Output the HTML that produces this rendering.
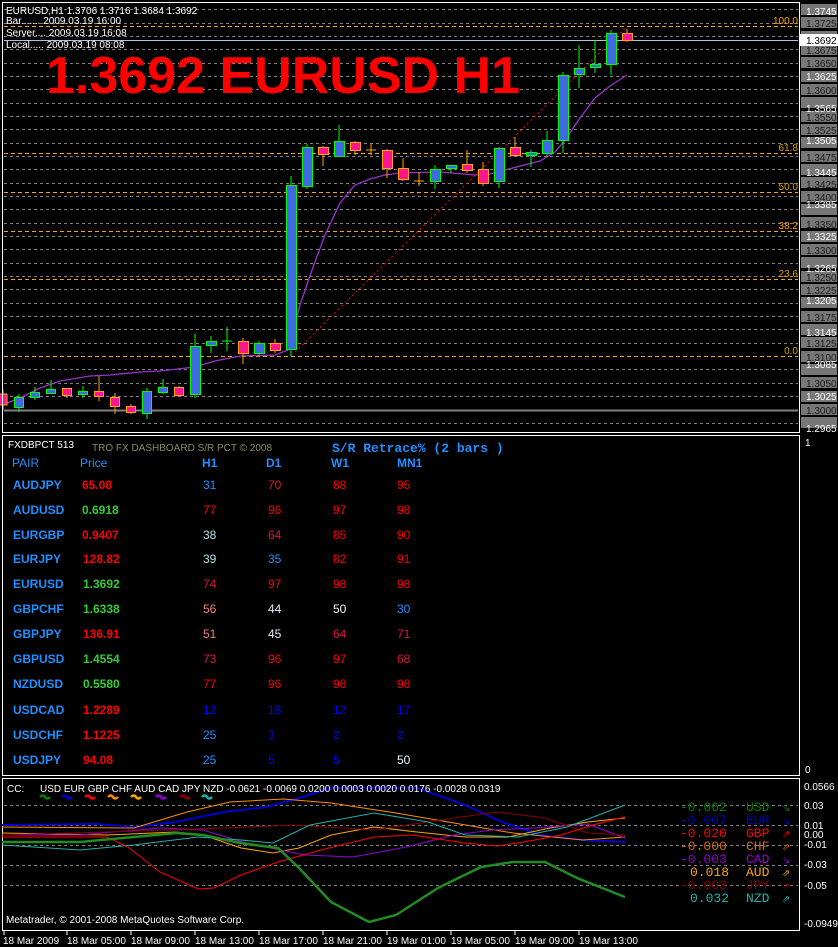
<!DOCTYPE html>
<html><head><meta charset="utf-8"><style>
html,body{margin:0;padding:0;background:#000;}
svg{display:block}
.s{font-family:"Liberation Sans",sans-serif;font-size:10px;}
.g{stroke:#808080;stroke-dasharray:3,3;stroke-width:1}
.f{stroke:#ffa500;stroke-dasharray:4,3;stroke-width:1}
.b rect{fill:#4169e1;stroke:#00ff00}.b line{stroke:#00ff00}
.r rect{fill:#ff1493;stroke:#ffa500}.r line{stroke:#ffa500}
.pb{fill:#777}
.pt{fill:#1a1a1a;font-family:"Liberation Sans",sans-serif;font-size:10px}
.wt{fill:#fff;font-family:"Liberation Sans",sans-serif;font-size:10px}
.d{font-family:"Liberation Sans",sans-serif;font-size:12px}
.db{font-family:"Liberation Sans",sans-serif;font-size:12px;font-weight:bold}
.m{font-family:"Liberation Mono",monospace;font-size:13px}
</style></head><body>
<svg width="838" height="947" viewBox="0 0 838 947" xmlns="http://www.w3.org/2000/svg">
<rect width="838" height="947" fill="#000"/>
<g class="g">
<line x1="4" x2="798" y1="9.5" y2="9.5"/><line x1="4" x2="798" y1="23.5" y2="23.5"/><line x1="4" x2="798" y1="36.5" y2="36.5"/><line x1="4" x2="798" y1="49.5" y2="49.5"/><line x1="4" x2="798" y1="63.5" y2="63.5"/><line x1="4" x2="798" y1="76.5" y2="76.5"/><line x1="4" x2="798" y1="89.5" y2="89.5"/><line x1="4" x2="798" y1="103.5" y2="103.5"/><line x1="4" x2="798" y1="116.5" y2="116.5"/><line x1="4" x2="798" y1="129.5" y2="129.5"/><line x1="4" x2="798" y1="143.5" y2="143.5"/><line x1="4" x2="798" y1="156.5" y2="156.5"/><line x1="4" x2="798" y1="169.5" y2="169.5"/><line x1="4" x2="798" y1="183.5" y2="183.5"/><line x1="4" x2="798" y1="196.5" y2="196.5"/><line x1="4" x2="798" y1="209.5" y2="209.5"/><line x1="4" x2="798" y1="223.5" y2="223.5"/><line x1="4" x2="798" y1="236.5" y2="236.5"/><line x1="4" x2="798" y1="249.5" y2="249.5"/><line x1="4" x2="798" y1="263.5" y2="263.5"/><line x1="4" x2="798" y1="276.5" y2="276.5"/><line x1="4" x2="798" y1="289.5" y2="289.5"/><line x1="4" x2="798" y1="303.5" y2="303.5"/><line x1="4" x2="798" y1="316.5" y2="316.5"/><line x1="4" x2="798" y1="329.5" y2="329.5"/><line x1="4" x2="798" y1="343.5" y2="343.5"/><line x1="4" x2="798" y1="369.5" y2="369.5"/><line x1="4" x2="798" y1="383.5" y2="383.5"/><line x1="4" x2="798" y1="396.5" y2="396.5"/><line x1="4" x2="798" y1="423.5" y2="423.5"/>
</g>
<line x1="4" x2="798" y1="410.5" y2="410.5" stroke="#808080" stroke-width="2"/>
<g class="f">
<line x1="4" x2="798" y1="26.5" y2="26.5"/><line x1="4" x2="798" y1="153.5" y2="153.5"/><line x1="4" x2="798" y1="192.5" y2="192.5"/><line x1="4" x2="798" y1="231.5" y2="231.5"/><line x1="4" x2="798" y1="279.5" y2="279.5"/><line x1="4" x2="798" y1="356.5" y2="356.5"/>
</g>
<g class="s" text-anchor="end">
<text x="798" y="24" fill="#ffa500">100.0</text><text x="798" y="151" fill="#d8a000">61.8</text><text x="798" y="190" fill="#d8a000">50.0</text><text x="798" y="229" fill="#ffa500">38.2</text><text x="798" y="277" fill="#d8a000">23.6</text><text x="798" y="354" fill="#c8a000">0.0</text>
</g>
<line x1="4" x2="798" y1="40.5" y2="40.5" stroke="#b0c4de"/>
<polyline fill="none" stroke="#9932cc" stroke-width="1.3" points="2,405 20,398 40,388 60,381 90,376 110,375 140,372 160,371 195,367 215,361 240,356 275,355 288,350 300,305 312,270 325,235 340,203 355,185 370,179 385,175 400,173 440,172 475,175 490,174 505,170 540,161 555,152 565,140 580,118 595,98 610,86 627,75"/>
<polyline fill="none" stroke="#ff0000" stroke-dasharray="2,3" points="295,352 625,28"/>
<g class="r"><line x1="3" x2="3" y1="390" y2="410"/><rect x="-1" y="394" width="8" height="11"/></g>
<g class="b"><line x1="19" x2="19" y1="394" y2="412"/><rect x="14.5" y="397.5" width="9" height="10"/></g>
<g class="b"><line x1="35" x2="35" y1="387" y2="400"/><rect x="30.5" y="392.5" width="9" height="5"/></g>
<g class="b"><line x1="51" x2="51" y1="380" y2="393"/><rect x="46.5" y="389.5" width="9" height="4"/></g>
<g class="r"><line x1="67" x2="67" y1="388" y2="398"/><rect x="62.5" y="388.5" width="9" height="7"/></g>
<g class="b"><line x1="83" x2="83" y1="386" y2="398"/><rect x="78.5" y="391.5" width="9" height="3"/></g>
<g class="r"><line x1="99" x2="99" y1="376" y2="401"/><rect x="94.5" y="391.5" width="9" height="5"/></g>
<g class="r"><line x1="115" x2="115" y1="393" y2="414"/><rect x="110.5" y="397.5" width="9" height="9"/></g>
<g class="r"><line x1="131" x2="131" y1="404" y2="414"/><rect x="126.5" y="406.5" width="9" height="6"/></g>
<g class="b"><line x1="147" x2="147" y1="388" y2="419"/><rect x="142.5" y="391.5" width="9" height="22"/></g>
<g class="b"><line x1="163" x2="163" y1="379" y2="394"/><rect x="158.5" y="387.5" width="9" height="5"/></g>
<g class="r"><line x1="179" x2="179" y1="386" y2="397"/><rect x="174.5" y="387.5" width="9" height="8"/></g>
<g class="b"><line x1="195" x2="195" y1="334" y2="398"/><rect x="190.5" y="346.5" width="10" height="48"/></g>
<g class="b"><line x1="211" x2="211" y1="336" y2="353"/><rect x="206.5" y="341.5" width="10" height="4"/></g>
<g class="b"><line x1="227" x2="227" y1="327" y2="351"/><line x1="222" x2="232" y1="341" y2="341"/></g>
<g class="r"><line x1="243" x2="243" y1="338" y2="364"/><rect x="238.5" y="341.5" width="10" height="12"/></g>
<g class="b"><line x1="259" x2="259" y1="341" y2="355"/><rect x="254.5" y="343.5" width="10" height="10"/></g>
<g class="r"><line x1="275" x2="275" y1="339" y2="353"/><rect x="270.5" y="343.5" width="10" height="7"/></g>
<g class="b"><line x1="291" x2="291" y1="176" y2="356"/><rect x="286.5" y="185.5" width="10" height="164"/></g>
<g class="b"><line x1="307" x2="307" y1="144" y2="189"/><rect x="302.5" y="147.5" width="10" height="39"/></g>
<g class="r"><line x1="323" x2="323" y1="146" y2="166"/><rect x="318.5" y="147.5" width="10" height="7"/></g>
<g class="b"><line x1="339" x2="339" y1="125" y2="156"/><rect x="334.5" y="141.5" width="10" height="15"/></g>
<g class="r"><line x1="355" x2="355" y1="141" y2="155"/><rect x="350.5" y="142.5" width="10" height="8"/></g>
<g class="r"><line x1="371" x2="371" y1="143" y2="155"/><line x1="366" x2="376" y1="150" y2="150"/></g>
<g class="r"><line x1="387" x2="387" y1="149" y2="178"/><rect x="382.5" y="150.5" width="10" height="18"/></g>
<g class="r"><line x1="403" x2="403" y1="158" y2="181"/><rect x="398.5" y="168.5" width="10" height="11"/></g>
<g class="r"><line x1="419" x2="419" y1="172" y2="186"/><line x1="414" x2="424" y1="181" y2="181"/></g>
<g class="b"><line x1="435" x2="435" y1="165" y2="189"/><rect x="430.5" y="169.5" width="10" height="12"/></g>
<g class="b"><line x1="451" x2="451" y1="165" y2="173"/><rect x="446.5" y="165.5" width="10" height="3"/></g>
<g class="r"><line x1="467" x2="467" y1="150" y2="173"/><rect x="462.5" y="164.5" width="10" height="6"/></g>
<g class="r"><line x1="483" x2="483" y1="162" y2="186"/><rect x="478.5" y="169.5" width="10" height="14"/></g>
<g class="b"><line x1="499" x2="499" y1="147" y2="188"/><rect x="494.5" y="148.5" width="10" height="33"/></g>
<g class="r"><line x1="515" x2="515" y1="137" y2="157"/><rect x="510.5" y="147.5" width="10" height="8"/></g>
<g class="b"><line x1="531" x2="531" y1="150" y2="167"/><rect x="526.5" y="152.5" width="10" height="3"/></g>
<g class="b"><line x1="547" x2="547" y1="131" y2="157"/><rect x="542.5" y="140.5" width="10" height="13"/></g>
<g class="b"><line x1="563" x2="563" y1="72" y2="153"/><rect x="558.5" y="75.5" width="10" height="65"/></g>
<g class="b"><line x1="579" x2="579" y1="45" y2="88"/><rect x="574.5" y="68.5" width="10" height="6"/></g>
<g class="b"><line x1="595" x2="595" y1="40" y2="73"/><rect x="590.5" y="64.5" width="10" height="3"/></g>
<g class="b"><line x1="611" x2="611" y1="30" y2="75"/><rect x="606.5" y="33.5" width="10" height="31"/></g>
<g class="r"><line x1="627" x2="627" y1="29" y2="42"/><rect x="622.5" y="33.5" width="10" height="7"/></g>
<g class="wt"><text x="6" y="14">EURUSD,H1  1.3706 1.3716 1.3684 1.3692</text><text x="6" y="24">Bar....... 2009.03.19 16:00</text><text x="6" y="36">Server.... 2009.03.19 16:08</text><text x="6" y="48">Local..... 2009.03.19 08:08</text></g>
<text x="46" y="93" fill="#ff0000" font-family="Liberation Sans,sans-serif" font-size="52" font-weight="bold">1.3692 EURUSD H1</text>
<g class="pb">
<rect x="801" y="4" width="36" height="11"/><rect x="801" y="17" width="36" height="11"/><rect x="801" y="31" width="36" height="11"/><rect x="801" y="44" width="36" height="11"/><rect x="801" y="57" width="36" height="11"/><rect x="801" y="71" width="36" height="11"/><rect x="801" y="84" width="36" height="11"/><rect x="801" y="97" width="36" height="11"/><rect x="801" y="111" width="36" height="11"/><rect x="801" y="124" width="36" height="11"/><rect x="801" y="137" width="36" height="11"/><rect x="801" y="151" width="36" height="11"/><rect x="801" y="164" width="36" height="11"/><rect x="801" y="177" width="36" height="11"/><rect x="801" y="191" width="36" height="11"/><rect x="801" y="204" width="36" height="11"/><rect x="801" y="217" width="36" height="11"/><rect x="801" y="231" width="36" height="11"/><rect x="801" y="244" width="36" height="11"/><rect x="801" y="257" width="36" height="11"/><rect x="801" y="271" width="36" height="11"/><rect x="801" y="284" width="36" height="11"/><rect x="801" y="297" width="36" height="11"/><rect x="801" y="311" width="36" height="11"/><rect x="801" y="324" width="36" height="11"/><rect x="801" y="337" width="36" height="11"/><rect x="801" y="351" width="36" height="11"/><rect x="801" y="364" width="36" height="11"/><rect x="801" y="377" width="36" height="11"/><rect x="801" y="391" width="36" height="11"/><rect x="801" y="404" width="36" height="11"/><rect x="801" y="417" width="36" height="11"/>
</g>
<g class="pt">
<text x="806" y="27">1.3725</text><text x="806" y="54">1.3675</text><text x="806" y="67">1.3650</text><text x="806" y="94">1.3600</text><text x="806" y="121">1.3550</text><text x="806" y="134">1.3525</text><text x="806" y="161">1.3475</text><text x="806" y="188">1.3425</text><text x="806" y="201">1.3400</text><text x="806" y="228">1.3350</text><text x="806" y="254">1.3300</text><text x="806" y="281">1.3250</text><text x="806" y="294">1.3225</text><text x="806" y="321">1.3175</text><text x="806" y="347">1.3125</text><text x="806" y="361">1.3100</text><text x="806" y="387">1.3050</text><text x="806" y="414">1.3000</text>
</g>
<rect x="800" y="34" width="38" height="12" fill="#fff"/>
<text x="806" y="44" fill="#000" class="s">1.3692</text>
<g class="wt">
<text x="806" y="15">1.3745</text><text x="806" y="80">1.3625</text><text x="806" y="112">1.3565</text><text x="806" y="144">1.3505</text><text x="806" y="176">1.3445</text><text x="806" y="208">1.3385</text><text x="806" y="240">1.3325</text><text x="806" y="272">1.3265</text><text x="806" y="304">1.3205</text><text x="806" y="336">1.3145</text><text x="806" y="368">1.3085</text><text x="806" y="400">1.3025</text><text x="806" y="432">1.2965</text>
</g>
<g stroke="#fff" fill="none">
<rect x="2.5" y="2.5" width="797" height="430"/>
<rect x="2.5" y="435.5" width="797" height="340"/>
<rect x="2.5" y="778.5" width="797" height="152"/>
</g>
<text x="8" y="448" fill="#fff" class="s">FXDBPCT 513</text>
<text x="92" y="451" fill="#8a8a6a" font-family="Liberation Sans,sans-serif" font-size="10">TRO FX DASHBOARD S/R PCT © 2008</text>
<text x="332" y="452" fill="#1e90ff" font-family="Liberation Mono,monospace" font-size="13" font-weight="bold">S/R Retrace% (2 bars )</text>
<text x="805" y="446" fill="#fff" class="s">1</text><text x="805" y="773" fill="#fff" class="s">0</text>
<g class="d" fill="#1e90ff"><text x="12" y="467">PAIR</text><text x="80" y="467">Price</text><text x="202" y="467" font-weight="bold">H1</text><text x="266" y="467" font-weight="bold">D1</text><text x="331" y="467" font-weight="bold">W1</text><text x="397" y="467" font-weight="bold">MN1</text></g>
<g class="db" fill="#1e90ff">
<text x="13" y="489">AUDJPY</text><text x="13" y="514">AUDUSD</text><text x="13" y="539">EURGBP</text><text x="13" y="563">EURJPY</text><text x="13" y="588">EURUSD</text><text x="13" y="613">GBPCHF</text><text x="13" y="638">GBPJPY</text><text x="13" y="663">GBPUSD</text><text x="13" y="688">NZDUSD</text><text x="13" y="714">USDCAD</text><text x="13" y="739">USDCHF</text><text x="13" y="764">USDJPY</text>
</g>
<g class="db">
<text x="82" y="489" fill="#ff0000">65.08</text><text x="82" y="514" fill="#32cd32">0.6918</text><text x="82" y="539" fill="#ff0000">0.9407</text><text x="83" y="563" fill="#ff0000">128.82</text><text x="83" y="588" fill="#32cd32">1.3692</text><text x="83" y="613" fill="#32cd32">1.6338</text><text x="83" y="638" fill="#ff0000">136.91</text><text x="83" y="663" fill="#32cd32">1.4554</text><text x="83" y="688" fill="#32cd32">0.5580</text><text x="83" y="714" fill="#ff0000">1.2289</text><text x="83" y="739" fill="#ff0000">1.1225</text><text x="83" y="764" fill="#ff0000">94.08</text>
</g>
<g class="d">
<text x="203" y="489" fill="#1e90ff">31</text><text x="268" y="489" fill="#dc143c">70</text><text x="333" y="489" fill="#ff0000">88</text><text x="397" y="489" fill="#ff0000">95</text>
<text x="203" y="514" fill="#ff0000">77</text><text x="268" y="514" fill="#ff0000">96</text><text x="333" y="514" fill="#ff0000">97</text><text x="397" y="514" fill="#ff0000">98</text>
<text x="203" y="539" fill="#b0e0e6">38</text><text x="268" y="539" fill="#dc143c">64</text><text x="333" y="539" fill="#ff0000">85</text><text x="397" y="539" fill="#ff0000">90</text>
<text x="203" y="563" fill="#b0e0e6">39</text><text x="268" y="563" fill="#1e90ff">35</text><text x="333" y="563" fill="#ff0000">82</text><text x="397" y="563" fill="#ff0000">91</text>
<text x="203" y="588" fill="#dc143c">74</text><text x="268" y="588" fill="#ff0000">97</text><text x="333" y="588" fill="#ff0000">98</text><text x="397" y="588" fill="#ff0000">98</text>
<text x="203" y="613" fill="#f08080">56</text><text x="268" y="613" fill="#e6e6fa">44</text><text x="333" y="613" fill="#f0f8ff">50</text><text x="397" y="613" fill="#1e90ff">30</text>
<text x="203" y="638" fill="#f08080">51</text><text x="268" y="638" fill="#e6e6fa">45</text><text x="333" y="638" fill="#dc143c">64</text><text x="397" y="638" fill="#dc143c">71</text>
<text x="203" y="663" fill="#dc143c">73</text><text x="268" y="663" fill="#ff0000">96</text><text x="333" y="663" fill="#ff0000">97</text><text x="397" y="663" fill="#dc143c">68</text>
<text x="203" y="688" fill="#ff0000">77</text><text x="268" y="688" fill="#ff0000">96</text><text x="333" y="688" fill="#ff0000">98</text><text x="397" y="688" fill="#ff0000">98</text>
<text x="203" y="714" fill="#0000ff">12</text><text x="268" y="714" fill="#0000ff">18</text><text x="333" y="714" fill="#0000ff">12</text><text x="397" y="714" fill="#0000ff">17</text>
<text x="203" y="739" fill="#1e90ff">25</text><text x="268" y="739" fill="#0000ff">3</text><text x="333" y="739" fill="#0000ff">2</text><text x="397" y="739" fill="#0000ff">2</text>
<text x="203" y="764" fill="#1e90ff">25</text><text x="268" y="764" fill="#0000ff">5</text><text x="333" y="764" fill="#0000ff">5</text><text x="397" y="764" fill="#f0f8ff">50</text>
</g>
<g class="g"><line x1="4" x2="798" y1="805.5" y2="805.5"/><line x1="4" x2="798" y1="825.5" y2="825.5"/><line x1="4" x2="798" y1="845.5" y2="845.5"/><line x1="4" x2="798" y1="865.5" y2="865.5"/><line x1="4" x2="798" y1="885.5" y2="885.5"/></g>
<g fill="none" stroke-width="1">
<polyline stroke="#0000cd" stroke-width="2" points="2,825 96,824 134,827 176,822 224,812 267,807 299,798 331,788 417,788 465,805 502,822 540,835 583,840 625,842"/>
<polyline stroke="#ff8c00" points="2,827 134,828 187,812 230,802 283,799 331,803 396,813 454,823 513,833 583,840 625,837"/>
<polyline stroke="#ffa500" points="2,833 107,835 176,832 203,835 241,848 273,853 299,848 331,835 374,827 417,832 465,837 508,837 550,828 588,822 625,818"/>
<polyline stroke="#9400d3" points="2,835 80,835 160,828 203,830 246,843 305,855 353,857 406,847 454,835 492,830 534,828 588,824 625,838"/>
<polyline stroke="#8b0000" points="2,835 107,832 224,828 294,825 374,830 454,818 497,812 545,818 588,833 625,835"/>
<polyline stroke="#20b2aa" points="2,845 80,850 134,845 198,837 241,840 273,843 310,825 374,813 428,822 465,835 518,837 567,827 625,805"/>
<polyline stroke="#ff0000" points="2,837 107,837 128,847 160,872 198,889 214,888 241,875 278,862 321,850 374,837 412,835 465,843 497,846 524,842 561,835 593,825 625,817"/>
<polyline stroke="#228b22" stroke-width="2.5" points="2,842 80,842 134,837 176,833 203,835 240,843 278,848 299,868 331,902 369,922 396,915 438,888 481,867 513,862 545,862 577,878 625,897"/>
</g>
<text x="7" y="792" fill="#fff" class="s">CC:</text>
<text x="40" y="792" fill="#fff" class="s">USD EUR GBP CHF AUD CAD JPY NZD -0.0621 -0.0069 0.0200 0.0003 0.0020 0.0176 -0.0028 0.0319</text>
<g fill="none" stroke-width="2.5"><path d="M40,797 q3,-3 5,0 t5,0" stroke="#008000"/><path d="M62,797 q3,-3 5,0 t5,0" stroke="#0000cd"/><path d="M85,797 q3,-3 5,0 t5,0" stroke="#ff0000"/><path d="M108,797 q3,-3 5,0 t5,0" stroke="#ff8c00"/><path d="M131,797 q3,-3 5,0 t5,0" stroke="#ffa500"/><path d="M156,797 q3,-3 5,0 t5,0" stroke="#9400d3"/><path d="M180,797 q3,-3 5,0 t5,0" stroke="#8b0000"/><path d="M202,797 q3,-3 5,0 t5,0" stroke="#20b2aa"/></g>
<g class="m">
<text x="680" y="811" fill="#008000">-0.062</text><text x="746" y="811" fill="#008000">USD</text><text x="782" y="811" fill="#008000">⇘</text>
<text x="680" y="824" fill="#0000cd">-0.007</text><text x="746" y="824" fill="#0000cd">EUR</text><text x="782" y="824" fill="#0000cd">⇘</text>
<text x="680" y="837" fill="#ff0000">-0.020</text><text x="746" y="837" fill="#ff0000">GBP</text><text x="782" y="837" fill="#ff0000">⇗</text>
<text x="680" y="850" fill="#d2691e">-0.000</text><text x="746" y="850" fill="#d2691e">CHF</text><text x="782" y="850" fill="#d2691e">⇗</text>
<text x="680" y="863" fill="#9400d3">-0.003</text><text x="746" y="863" fill="#9400d3">CAD</text><text x="782" y="863" fill="#9400d3">⇘</text>
<text x="690" y="876" fill="#ffa500">0.018</text><text x="746" y="876" fill="#ffa500">AUD</text><text x="782" y="876" fill="#ffa500">⇗</text>
<text x="680" y="889" fill="#8b0000">-0.003</text><text x="746" y="889" fill="#8b0000">JPY</text><text x="782" y="889" fill="#8b0000">⇗</text>
<text x="690" y="902" fill="#20b2aa">0.032</text><text x="746" y="902" fill="#20b2aa">NZD</text><text x="782" y="902" fill="#20b2aa">⇗</text>
</g>
<g class="wt">
<text x="804" y="790">0.0566</text><text x="804" y="809">0.03</text><text x="804" y="829">0.01</text><text x="804" y="838">0.00</text><text x="804" y="848">-0.01</text><text x="804" y="868">-0.03</text><text x="804" y="889">-0.05</text><text x="804" y="927">-0.0949</text>
</g>
<text x="6" y="923" fill="#fff" class="s">Metatrader, © 2001-2008 MetaQuotes Software Corp.</text>
<g stroke="#fff"><line x1="4" x2="4" y1="930" y2="935"/><line x1="67" x2="67" y1="930" y2="935"/><line x1="131" x2="131" y1="930" y2="935"/><line x1="195" x2="195" y1="930" y2="935"/><line x1="259" x2="259" y1="930" y2="935"/><line x1="323" x2="323" y1="930" y2="935"/><line x1="387" x2="387" y1="930" y2="935"/><line x1="451" x2="451" y1="930" y2="935"/><line x1="515" x2="515" y1="930" y2="935"/><line x1="579" x2="579" y1="930" y2="935"/></g>
<g class="wt"><text x="3" y="944">18 Mar 2009</text><text x="67" y="944">18 Mar 05:00</text><text x="131" y="944">18 Mar 09:00</text><text x="195" y="944">18 Mar 13:00</text><text x="259" y="944">18 Mar 17:00</text><text x="323" y="944">18 Mar 21:00</text><text x="387" y="944">19 Mar 01:00</text><text x="451" y="944">19 Mar 05:00</text><text x="515" y="944">19 Mar 09:00</text><text x="579" y="944">19 Mar 13:00</text></g>
</svg>
</body></html>
